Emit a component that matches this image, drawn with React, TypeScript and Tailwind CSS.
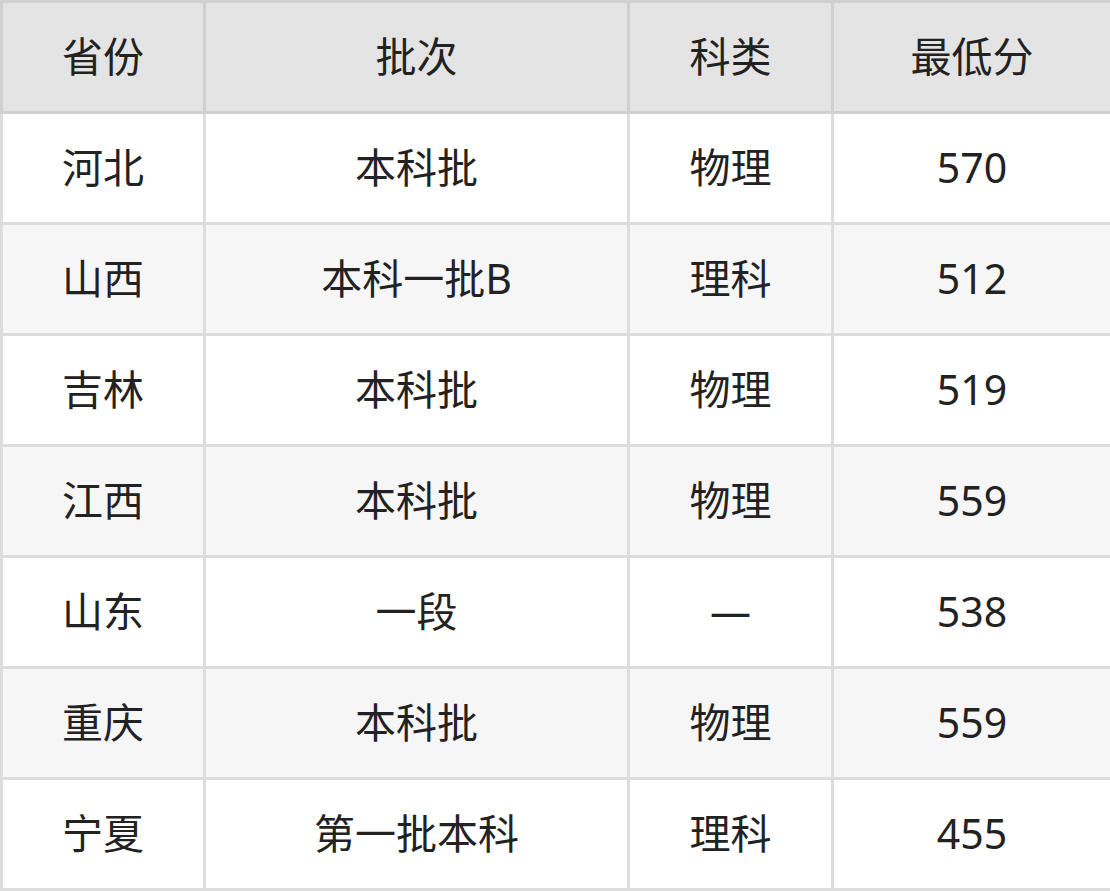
import React from "react";

const rows = [
  ["河北", "本科批", "物理", "570"],
  ["山西", "本科一批B", "理科", "512"],
  ["吉林", "本科批", "物理", "519"],
  ["江西", "本科批", "物理", "559"],
  ["山东", "一段", "—", "538"],
  ["重庆", "本科批", "物理", "559"],
  ["宁夏", "第一批本科", "理科", "455"],
];

const App = () => {
  return (
    <div
      className="w-[1110px] h-[891px] bg-white text-[#222]"
      style={{ fontFamily: '"Noto Sans", "Noto Sans CJK SC", sans-serif' }}
    >
      <table className="w-[1110px] border-collapse table-fixed text-[41px]">
        <colgroup>
          <col className="w-[203px]" />
          <col className="w-[424px]" />
          <col className="w-[204px]" />
          <col className="w-[279px]" />
        </colgroup>
        <thead>
          <tr className="h-[111px] bg-[#e4e4e4]">
            {["省份", "批次", "科类", "最低分"].map((h) => (
              <th key={h} className="border-[3px] border-[#d0d0d0] font-normal text-center">
                {h}
              </th>
            ))}
          </tr>
        </thead>
        <tbody>
          {rows.map((r, i) => (
            <tr key={i} className={"h-[111px] " + (i % 2 === 1 ? "bg-[#f6f6f6]" : "bg-white")}>
              {r.map((c, j) => (
                <td key={j} className="border-[3px] border-[#dddddd] text-center">
                  {c}
                </td>
              ))}
            </tr>
          ))}
        </tbody>
      </table>
    </div>
  );
};

export default App;
